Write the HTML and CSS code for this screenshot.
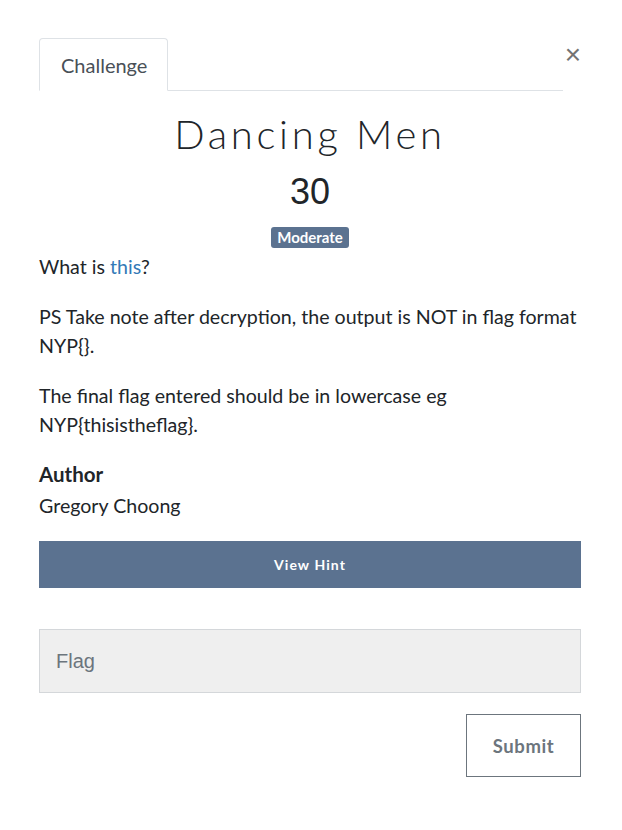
FILE: index.html
```html
<!DOCTYPE html>
<html>
<head>
<meta charset="utf-8">
<link rel="stylesheet" href="styles.css">
</head>
<body>
<div class="modal">
  <div class="header">
    <div class="tabs">
      <div class="tab">Challenge</div>
    </div>
    <div class="close">&times;</div>
  </div>
  <h2 class="title">Dancing Men</h2>
  <h3 class="value">30</h3>
  <div class="badge-row"><span class="badge">Moderate</span></div>
  <div class="desc">
    <p class="p1">What is <a href="#">this</a>?</p>
    <p>PS Take note after decryption, the output is NOT in flag format NYP{}.</p>
    <p>The final flag entered should be in lowercase eg NYP{thisistheflag}.</p>
    <h4 class="author-h">Author</h4>
    <p class="author">Gregory Choong</p>
  </div>
  <button class="hint">View Hint</button>
  <div class="flag">Flag</div>
  <div class="submit-row"><button class="submit">Submit</button></div>
</div>
</body>
</html>
```

FILE: styles.css
```css
html, body {
  margin: 0;
  padding: 0;
  background: #ffffff;
}
body {
  font-family: Lato, "Open Sans", sans-serif;
  color: #212529;
}
.modal {
  width: 542px;
  margin-left: 39px;
  padding-top: 38px;
}
.header {
  display: flex;
  align-items: flex-start;
}
.tabs {
  flex: 1;
  display: flex;
  border-bottom: 1px solid #dee2e6;
}
.tab {
  border: 1px solid #dee2e6;
  border-bottom-color: #ffffff;
  border-radius: 4px 4px 0 0;
  margin-bottom: -1px;
  padding: 14px 20px 13px 21px;
  font-size: 20px;
  line-height: 24px;
  color: #495057;
}
.close {
  font-size: 28px;
  line-height: 28px;
  color: #737373;
  font-family: "Liberation Sans", Arial, sans-serif;
  margin-top: 3px;
  width: 18px;
  text-align: right;
}
.title {
  margin: 19px 0 0;
  text-align: center;
  font-family: Lato, sans-serif;
  font-weight: 300;
  font-size: 40px;
  line-height: 48px;
  letter-spacing: 3.7px;
  color: #212529;
}
.value {
  margin: 12px 0 0;
  text-align: center;
  font-family: "Liberation Sans", Arial, sans-serif;
  font-weight: 400;
  font-size: 36px;
  line-height: 43px;
  color: #212529;
}
.badge-row {
  margin-top: 14px;
  text-align: center;
  line-height: 21px;
  height: 21px;
}
.badge {
  display: inline-block;
  background: #5b7290;
  color: #ffffff;
  font-weight: 700;
  font-size: 15px;
  line-height: 17px;
  padding: 2px 6px;
  border-radius: 3px;
  vertical-align: top;
}
.desc {
  font-size: 19.6px;
  line-height: 29px;
}
.desc p {
  margin: 0 0 21px;
}
.desc .p1 {
  margin-top: 4px;
}
.desc a {
  color: #337ab7;
  text-decoration: none;
}
.author-h {
  margin: 0;
  font-size: 20.5px;
  line-height: 29px;
  font-weight: 700;
}
.desc .author {
  margin: 2px 0 0;
}
.hint {
  display: block;
  width: 542px;
  height: 47px;
  margin-top: 21px;
  border: none;
  background: #5b7290;
  color: #ffffff;
  font-family: Lato, sans-serif;
  font-weight: 700;
  font-size: 14px;
  letter-spacing: 1.1px;
}
.flag {
  box-sizing: border-box;
  margin-top: 41px;
  height: 64px;
  background: #efefef;
  border: 1px solid #d4d7da;
  padding: 0 16px;
  font-family: "Liberation Sans", Arial, sans-serif;
  font-size: 20px;
  line-height: 62px;
  color: #6c757d;
}
.submit-row {
  display: flex;
  justify-content: flex-end;
  margin-top: 21px;
}
.submit {
  box-sizing: border-box;
  width: 115px;
  height: 63px;
  background: #ffffff;
  border: 1px solid #6c757d;
  color: #6c757d;
  font-family: Lato, sans-serif;
  font-weight: 700;
  font-size: 18.5px;
  letter-spacing: 0.6px;
}
```
